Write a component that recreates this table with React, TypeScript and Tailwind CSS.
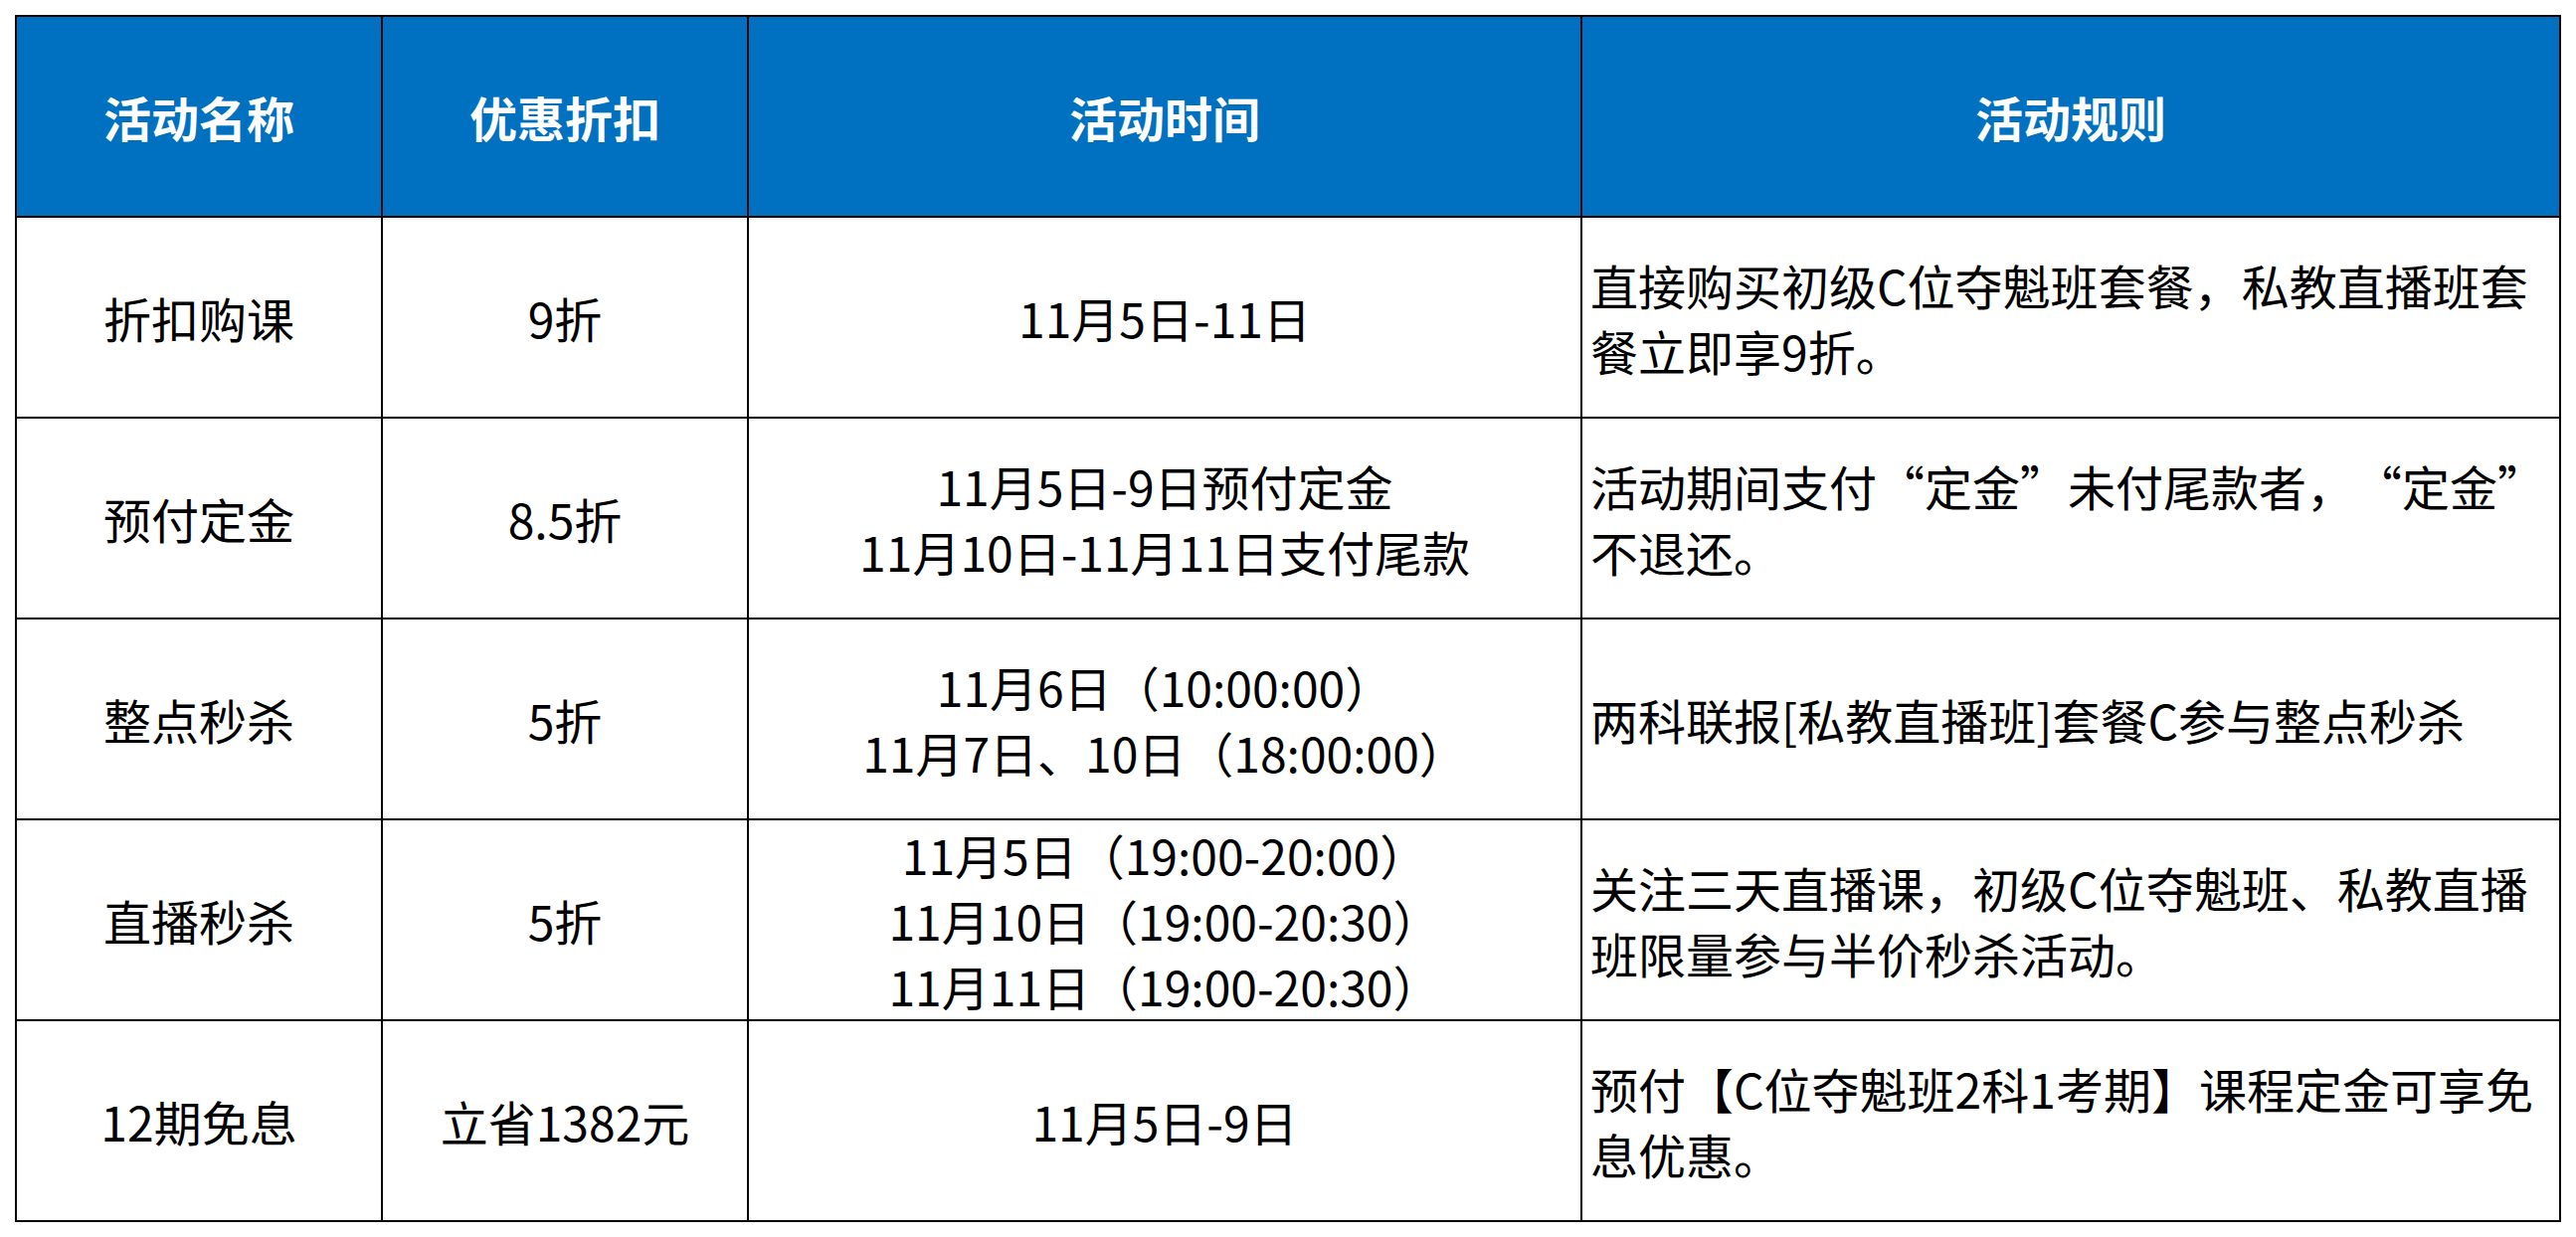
import React from "react"

interface Row {
    name: string
    discount: string
    time: string[]
    rules: string[]
}

const headers = ["活动名称", "优惠折扣", "活动时间", "活动规则"]

const rows: Row[] = [
    {
        name: "折扣购课",
        discount: "9折",
        time: ["11月5日-11日"],
        rules: ["直接购买初级C位夺魁班套餐，私教直播班套", "餐立即享9折。"],
    },
    {
        name: "预付定金",
        discount: "8.5折",
        time: ["11月5日-9日预付定金", "11月10日-11月11日支付尾款"],
        rules: ["活动期间支付“定金”未付尾款者，“定金”", "不退还。"],
    },
    {
        name: "整点秒杀",
        discount: "5折",
        time: ["11月6日（10:00:00）", "11月7日、10日（18:00:00）"],
        rules: ["两科联报[私教直播班]套餐C参与整点秒杀"],
    },
    {
        name: "直播秒杀",
        discount: "5折",
        time: ["11月5日（19:00-20:00）", "11月10日（19:00-20:30）", "11月11日（19:00-20:30）"],
        rules: ["关注三天直播课，初级C位夺魁班、私教直播", "班限量参与半价秒杀活动。"],
    },
    {
        name: "12期免息",
        discount: "立省1382元",
        time: ["11月5日-9日"],
        rules: ["预付【C位夺魁班2科1考期】课程定金可享免", "息优惠。"],
    },
]

// column widths include each cell's right border
const cell = "h-[202px] border-r-2 border-b-2 border-black flex flex-col justify-center"

export default function App() {
    return (
        <div
            className="w-[2590px] h-[1244px] bg-white pt-[15px] pl-[15px] text-black"
            style={{ fontFamily: '"Noto Sans CJK SC", "Microsoft YaHei", sans-serif' }}
        >
            <div className="w-[2560px] grid grid-cols-[368px_368px_838px_984px] border-l-2 border-t-2 border-black text-[48px] leading-[66px] [text-spacing-trim:space-all]">
                {/* Header */}
                {headers.map((h) => (
                    <div key={h} className={`${cell} items-center bg-[#0070c0] text-white font-bold`}>
                        {h}
                    </div>
                ))}

                {/* Body */}
                {rows.map((r) => (
                    <React.Fragment key={r.name}>
                        <div className={`${cell} items-center`}>{r.name}</div>
                        <div className={`${cell} items-center`}>{r.discount}</div>
                        <div className={`${cell} items-center`}>
                            {r.time.map((t) => (
                                <div key={t} className="whitespace-nowrap">{t}</div>
                            ))}
                        </div>
                        <div className={`${cell} items-start pl-[8px]`}>
                            {r.rules.map((t) => (
                                <div key={t} className="whitespace-nowrap">{t}</div>
                            ))}
                        </div>
                    </React.Fragment>
                ))}
            </div>
        </div>
    )
}
